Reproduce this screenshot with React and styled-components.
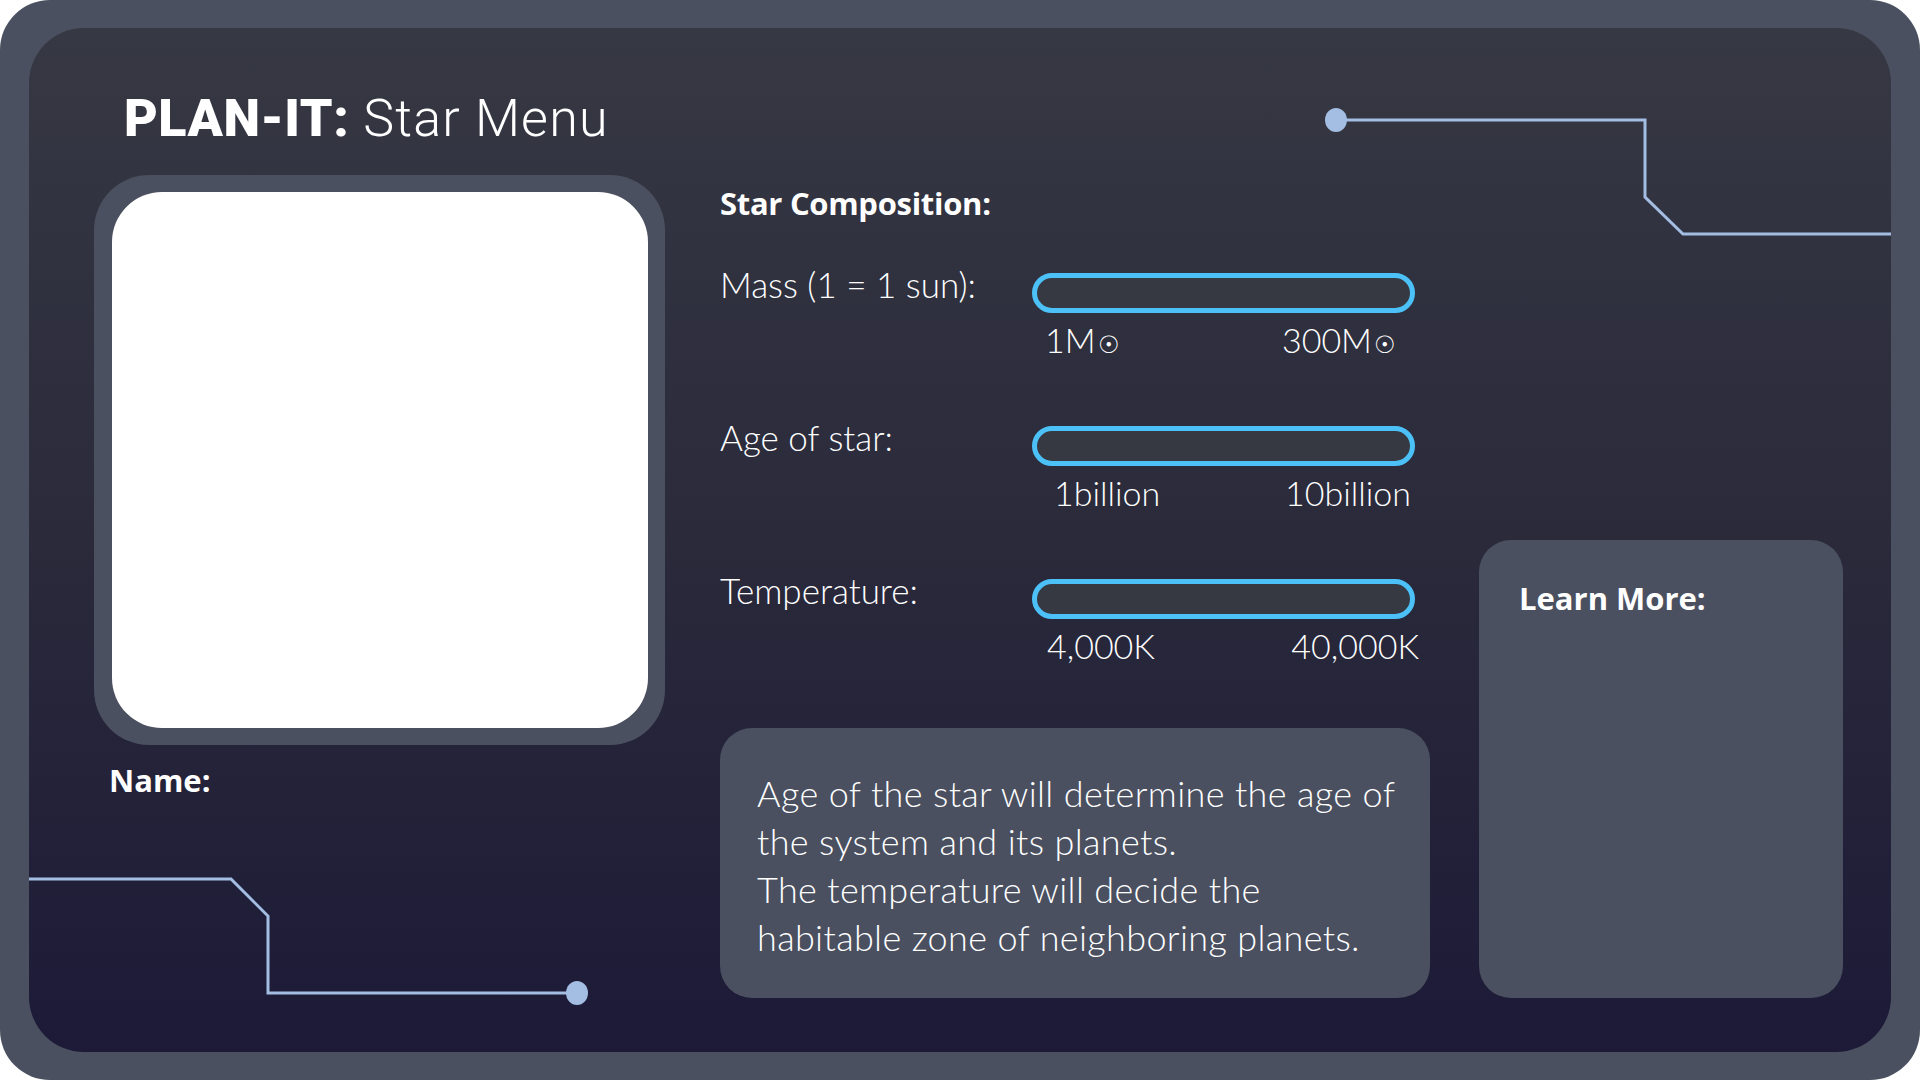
import React from 'react';
import styled, { createGlobalStyle } from 'styled-components';

const Global = createGlobalStyle`
  html, body { margin: 0; padding: 0; background: #ffffff; }
  body { width: 1920px; height: 1080px; overflow: hidden; font-family: Lato, "Open Sans", sans-serif; }
  #root { width: 1920px; height: 1080px; }
`;

const Frame = styled.div`
  box-sizing: border-box;
  width: 1920px;
  height: 1080px;
  background: #4a505f;
  border-radius: 50px;
  padding: 28px 29px;
`;

const Panel = styled.main`
  position: relative;
  box-sizing: border-box;
  height: 100%;
  border-radius: 55px;
  background: linear-gradient(180deg, #363843 0%, #2a2a3b 50%, #1c1a37 100%);
  padding: 65px 48px 54px 65px;
  display: flex;
  overflow: hidden;
`;

const Circuit = styled.svg`
  position: absolute;
  left: 0;
  top: 0;
  width: 100%;
  height: 100%;
  pointer-events: none;
`;

const LeftCol = styled.section`
  width: 571px;
  flex: none;
  display: flex;
  flex-direction: column;
`;

const Title = styled.h1`
  margin: 1px 0 0 30px;
  height: 50px;
  font-family: Roboto, "Open Sans", sans-serif;
  font-size: 52px;
  line-height: 50px;
  font-weight: 300;
  letter-spacing: 1.2px;
  color: #ffffff;
  white-space: nowrap;
`;

const Brand = styled.span`
  font-weight: 900;
  letter-spacing: 0.5px;
  margin-right: 14px;
`;

const PhotoFrame = styled.div`
  box-sizing: border-box;
  margin-top: 31px;
  width: 571px;
  height: 570px;
  background: #4a505f;
  border-radius: 55px;
  padding: 17px 17px 17px 18px;
  display: flex;
`;

const Photo = styled.div`
  flex: 1;
  background: #ffffff;
  border-radius: 50px;
`;

const BoldLabel = styled.div`
  margin: ${p => p.$m || '0'};
  font-family: "Open Sans", sans-serif;
  font-weight: 700;
  font-size: 31px;
  line-height: 1;
  letter-spacing: ${p => p.$ls || 0}px;
  color: #ffffff;
  white-space: nowrap;
`;

const MidCol = styled.section`
  width: 710px;
  flex: none;
  margin-left: 55px;
  display: flex;
  flex-direction: column;
`;

const Rows = styled.div`
  margin-top: 48px;
  display: flex;
  flex-direction: column;
  gap: 63px;
`;

const Row = styled.div`
  display: grid;
  grid-template-columns: 312px 383px;
  align-items: start;
`;

const RowLabel = styled.div`
  font-family: Lato, sans-serif;
  font-weight: 300;
  font-size: 35px;
  line-height: 1;
  color: #ffffff;
  white-space: nowrap;
`;

const BarGroup = styled.div`
  padding-top: 6px;
`;

const Bar = styled.div`
  box-sizing: border-box;
  height: 40px;
  border: 5px solid #4cc1f7;
  border-radius: 20px;
  background: #363842;
`;

const Scale = styled.div`
  margin-top: 10px;
  display: flex;
  justify-content: space-between;
  padding: 0 ${p => p.$r}px 0 ${p => p.$l}px;
  margin-right: ${p => p.$mr || 0}px;
  font-family: Lato, "DejaVu Sans", sans-serif;
  font-weight: 300;
  font-size: 34px;
  line-height: 1;
  color: #ffffff;
  white-space: nowrap;
`;

const Sun = styled.span`
  font-family: "DejaVu Sans", sans-serif;
  font-size: 0.72em;
  font-weight: 300;
  margin-left: 2px;
`;

const InfoBox = styled.div`
  box-sizing: border-box;
  margin-top: auto;
  height: 270px;
  border-radius: 32px;
  background: #4a505f;
  padding: 41px 0 0 37px;
  font-family: Lato, sans-serif;
  font-weight: 300;
  font-size: 36px;
  letter-spacing: 0.35px;
  line-height: 48px;
  color: #ffffff;
  white-space: nowrap;
`;

const LearnBox = styled.aside`
  box-sizing: border-box;
  width: 364px;
  height: 458px;
  flex: none;
  align-self: flex-end;
  margin-left: 49px;
  border-radius: 32px;
  background: #4a505f;
  padding: 43px 0 0 40px;
`;

const sliders = [
  { label: 'Mass (1 = 1 sun):', min: '1M', max: '300M', sun: true, l: 13, r: 19 },
  { label: 'Age of star:', min: '1billion', max: '10billion', l: 22, r: 4 },
  { label: 'Temperature:', min: '4,000K', max: '40,000K', l: 15, r: 0, mr: -4 },
];

export default function App() {
  return (
    <>
      <Global />
      <Frame>
        <Panel>
          <Circuit viewBox="0 0 1862 1024">
            <g fill="none" stroke="#a3bde3" strokeWidth="3" strokeLinejoin="miter">
              <path d="M1307 92 L1616 92 L1616 169 L1654 206 L1862 206" />
              <path d="M-4 851 L202 851 L239 888 L239 965 L548 965" />
            </g>
            <ellipse cx="1307" cy="92" rx="11" ry="12" fill="#a3bde3" />
            <ellipse cx="548" cy="965" rx="11" ry="12" fill="#a3bde3" />
          </Circuit>

          <LeftCol>
            <Title>
              <Brand>PLAN-IT:</Brand>Star Menu
            </Title>
            <PhotoFrame>
              <Photo />
            </PhotoFrame>
            <BoldLabel $m="20px 0 0 15px">Name:</BoldLabel>
          </LeftCol>

          <MidCol>
            <BoldLabel $m="95px 0 0 0" $ls={-0.3}>Star Composition:</BoldLabel>
            <Rows>
              {sliders.map(s => (
                <Row key={s.label}>
                  <RowLabel>{s.label}</RowLabel>
                  <BarGroup>
                    <Bar role="slider" aria-label={s.label} />
                    <Scale $l={s.l} $r={s.r} $mr={s.mr}>
                      <span>
                        {s.min}
                        {s.sun && <Sun>☉</Sun>}
                      </span>
                      <span>
                        {s.max}
                        {s.sun && <Sun>☉</Sun>}
                      </span>
                    </Scale>
                  </BarGroup>
                </Row>
              ))}
            </Rows>
            <InfoBox>
              Age of the star will determine the age of
              <br />
              the system and its planets.
              <br />
              The temperature will decide the
              <br />
              habitable zone of neighboring planets.
            </InfoBox>
          </MidCol>

          <LearnBox>
            <BoldLabel>Learn More:</BoldLabel>
          </LearnBox>
        </Panel>
      </Frame>
    </>
  );
}
